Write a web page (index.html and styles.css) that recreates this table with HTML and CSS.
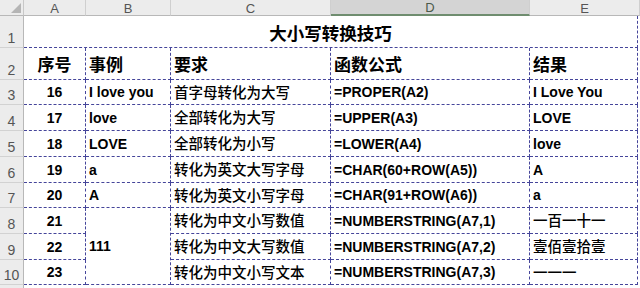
FILE: index.html
```html
<!DOCTYPE html>
<html lang="zh-CN">
<head>
<meta charset="utf-8">
<title>大小写转换技巧</title>
<link rel="stylesheet" href="styles.css">
</head>
<body>
<div class="sheet">
  <div class="corner"><svg width="10" height="10" viewBox="0 0 10 10"><polygon points="10,0 10,10 0,10" fill="#b5b5b5"/></svg></div>
  <div class="colhead">A</div>
  <div class="colhead">B</div>
  <div class="colhead">C</div>
  <div class="colhead sel">D</div>
  <div class="colhead">E</div>

  <div class="rowhead">1</div>
  <div class="title">大小写转换技巧</div>

  <div class="rowhead">2</div>
  <div class="cell hd center">序号</div>
  <div class="cell hd">事例</div>
  <div class="cell hd">要求</div>
  <div class="cell hd">函数公式</div>
  <div class="cell hd">结果</div>

  <div class="rowhead">3</div>
  <div class="cell b center">16</div>
  <div class="cell b">I love you</div>
  <div class="cell zh">首字母转化为大写</div>
  <div class="cell b">=PROPER(A2)</div>
  <div class="cell b">I Love You</div>

  <div class="rowhead">4</div>
  <div class="cell b center">17</div>
  <div class="cell b">love</div>
  <div class="cell zh">全部转化为大写</div>
  <div class="cell b">=UPPER(A3)</div>
  <div class="cell b">LOVE</div>

  <div class="rowhead">5</div>
  <div class="cell b center">18</div>
  <div class="cell b">LOVE</div>
  <div class="cell zh">全部转化为小写</div>
  <div class="cell b">=LOWER(A4)</div>
  <div class="cell b">love</div>

  <div class="rowhead">6</div>
  <div class="cell b center">19</div>
  <div class="cell b">a</div>
  <div class="cell zh">转化为英文大写字母</div>
  <div class="cell b">=CHAR(60+ROW(A5))</div>
  <div class="cell b">A</div>

  <div class="rowhead">7</div>
  <div class="cell b center">20</div>
  <div class="cell b">A</div>
  <div class="cell zh">转化为英文小写字母</div>
  <div class="cell b">=CHAR(91+ROW(A6))</div>
  <div class="cell b">a</div>

  <div class="rowhead">8</div>
  <div class="cell b center">21</div>
  <div class="cell b merged">111</div>
  <div class="cell zh">转化为中文小写数值</div>
  <div class="cell b">=NUMBERSTRING(A7,1)</div>
  <div class="cell zh">一百一十一</div>

  <div class="rowhead">9</div>
  <div class="cell b center">22</div>
  <div class="cell zh">转化为中文大写数值</div>
  <div class="cell b">=NUMBERSTRING(A7,2)</div>
  <div class="cell zh">壹佰壹拾壹</div>

  <div class="rowhead">10</div>
  <div class="cell b center">23</div>
  <div class="cell zh">转化为中文小写文本</div>
  <div class="cell b">=NUMBERSTRING(A7,3)</div>
  <div class="cell zh">一一一</div>

  <div class="rowhead last"></div>
  <div class="filler"></div>
</div>
</body>
</html>
```
FILE: styles.css
```css
html, body {
  margin: 0;
  padding: 0;
  background: #ffffff;
}
.sheet {
  display: grid;
  grid-template-columns: 24px 62px 85px 160px 199px 108px 2px;
  grid-template-rows: 16px 32px 32px 25px 26px 26px 26px 25px 26px 26px 25px 3px;
  width: 640px;
  height: 288px;
  overflow: hidden;
  font-family: "Liberation Sans", Arial, "Noto Sans CJK SC", sans-serif;
  color: #000;
}
.corner {
  background: #ececec;
  border-right: 1px solid #c8c8c8;
  border-bottom: 1px solid #b8b8b8;
  display: flex;
  align-items: flex-end;
  justify-content: flex-end;
  padding: 0 2px 2px 0;
  box-sizing: border-box;
}
.colhead {
  background: #ececec;
  border-right: 1px solid #cfcfcf;
  border-bottom: 1px solid #b8b8b8;
  box-sizing: border-box;
  font-size: 13px;
  color: #555;
  display: flex;
  align-items: center;
  justify-content: center;
  line-height: 1;
  padding-top: 1px;
}
.colhead.sel {
  background: #d4d4d4;
  border-bottom: 2px solid #6f8d6f;
  color: #4a5a4a;
}
.colhead:nth-child(6) {
  grid-column: 6 / 8;
}
.rowhead {
  grid-column: 1;
  background: #ececec;
  border-right: 1px solid #b8b8b8;
  border-bottom: 1px solid #d2d2d2;
  box-sizing: border-box;
  font-size: 14px;
  color: #555;
  display: flex;
  align-items: flex-end;
  justify-content: center;
  padding-bottom: 2px;
  line-height: 1;
}
.rowhead.last {
  border-bottom: none;
}
.filler {
  grid-column: 2 / 8;
}
.title {
  grid-column: 2 / 7;
  border-right: 1px dashed #45459a;
  border-bottom: 1px dashed #45459a;
  box-sizing: border-box;
  display: flex;
  align-items: center;
  justify-content: center;
  font-family: "Noto Sans CJK SC", sans-serif;
  font-weight: 700;
  font-size: 17.5px;
  padding-top: 1px;
}
.cell {
  border-right: 1px dashed #45459a;
  border-bottom: 1px dashed #45459a;
  box-sizing: border-box;
  display: flex;
  align-items: center;
  padding-left: 3px;
  white-space: nowrap;
  overflow: hidden;
  line-height: 1;
}
.sheet > .cell:nth-of-type(n) {
  grid-column: auto;
}
.hd {
  font-family: "Noto Sans CJK SC", sans-serif;
  font-weight: 700;
  font-size: 17px;
}
.b {
  font-weight: 700;
  font-size: 14px;
}
.zh {
  font-family: "Noto Sans CJK SC", sans-serif;
  font-size: 14.5px;
  font-weight: 500;
}
.center {
  justify-content: center;
  padding-left: 0;
}
.merged {
  grid-row: span 3;
}
```
